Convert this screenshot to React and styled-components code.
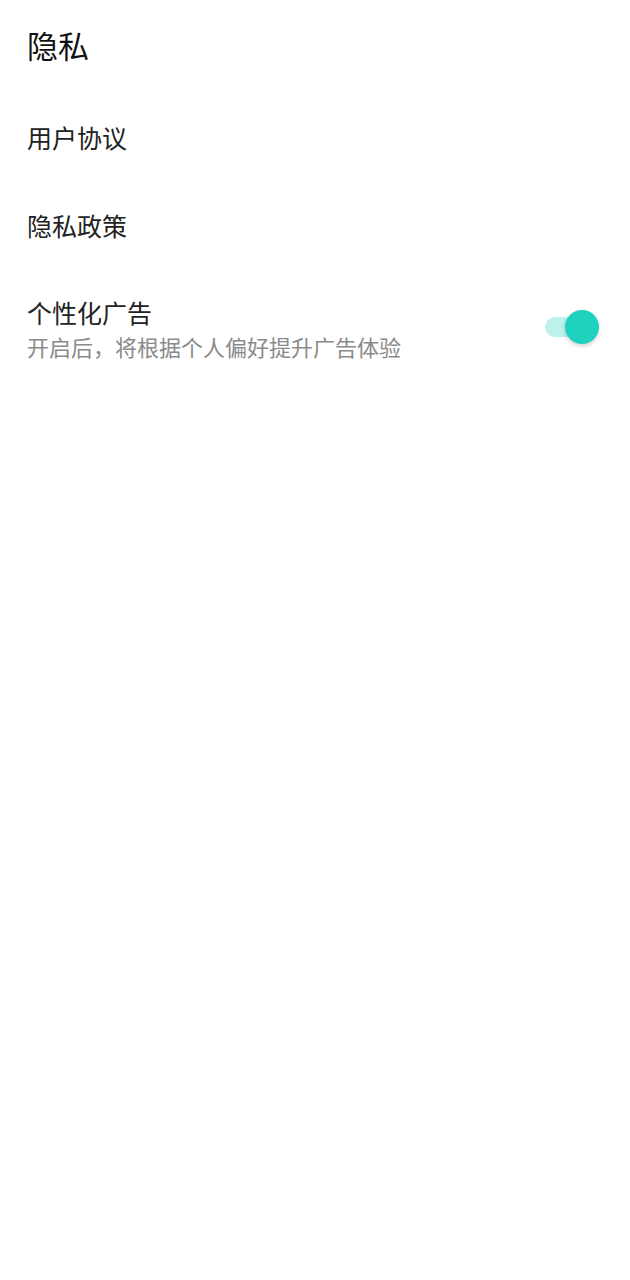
import React, { useState } from "react";
import styled, { createGlobalStyle } from "styled-components";

const GlobalStyle = createGlobalStyle`
  html, body {
    margin: 0;
    padding: 0;
    background: #ffffff;
  }
  body {
    font-family: "Noto Sans CJK SC", "Noto Sans", sans-serif;
  }
`;

const Page = styled.div`
  width: 630px;
  min-height: 1280px;
  background: #ffffff;
  padding-left: 27px;
  box-sizing: border-box;
`;

const Title = styled.h1`
  margin: 0 0 3px;
  font-size: 31px;
  font-weight: 400;
  line-height: 90px;
  color: #111111;
`;

const Item = styled.div`
  display: flex;
  align-items: center;
  justify-content: space-between;
  height: 88px;
  padding-right: 30px;
  font-size: 25px;
  color: #222222;
`;

const SwitchRow = styled.div`
  display: flex;
  align-items: center;
  justify-content: space-between;
  padding: 26px 31px 20px 0;
`;

const Texts = styled.div`
  display: flex;
  flex-direction: column;
`;

const ItemTitle = styled.div`
  font-size: 25px;
  line-height: 34px;
  color: #222222;
`;

const ItemDesc = styled.div`
  font-size: 22px;
  line-height: 34px;
  color: #8a8a8a;
`;

const Toggle = styled.button`
  position: relative;
  width: 54px;
  height: 34px;
  padding: 0;
  border: none;
  background: transparent;
  cursor: pointer;
  margin-top: -4px;

  &::before {
    content: "";
    position: absolute;
    left: 0;
    top: 7px;
    width: 50px;
    height: 20px;
    border-radius: 10px;
    background: ${(p) => (p.on ? "#bdf1eb" : "#dddddd")};
  }

  &::after {
    content: "";
    position: absolute;
    top: 0;
    left: ${(p) => (p.on ? "20px" : "-4px")};
    width: 34px;
    height: 34px;
    border-radius: 50%;
    background: ${(p) => (p.on ? "#1fd2bf" : "#f5f5f5")};
    box-shadow: 0 2px 4px rgba(0, 0, 0, 0.18);
    transition: left 0.15s;
  }
`;

export default function App() {
  const [on, setOn] = useState(true);
  return (
    <>
      <GlobalStyle />
      <Page>
        <Title>隐私</Title>
        <Item>用户协议</Item>
        <Item>隐私政策</Item>
        <SwitchRow>
          <Texts>
            <ItemTitle>个性化广告</ItemTitle>
            <ItemDesc>开启后，将根据个人偏好提升广告体验</ItemDesc>
          </Texts>
          <Toggle on={on ? 1 : 0} onClick={() => setOn(!on)} aria-label="个性化广告" />
        </SwitchRow>
      </Page>
    </>
  );
}
